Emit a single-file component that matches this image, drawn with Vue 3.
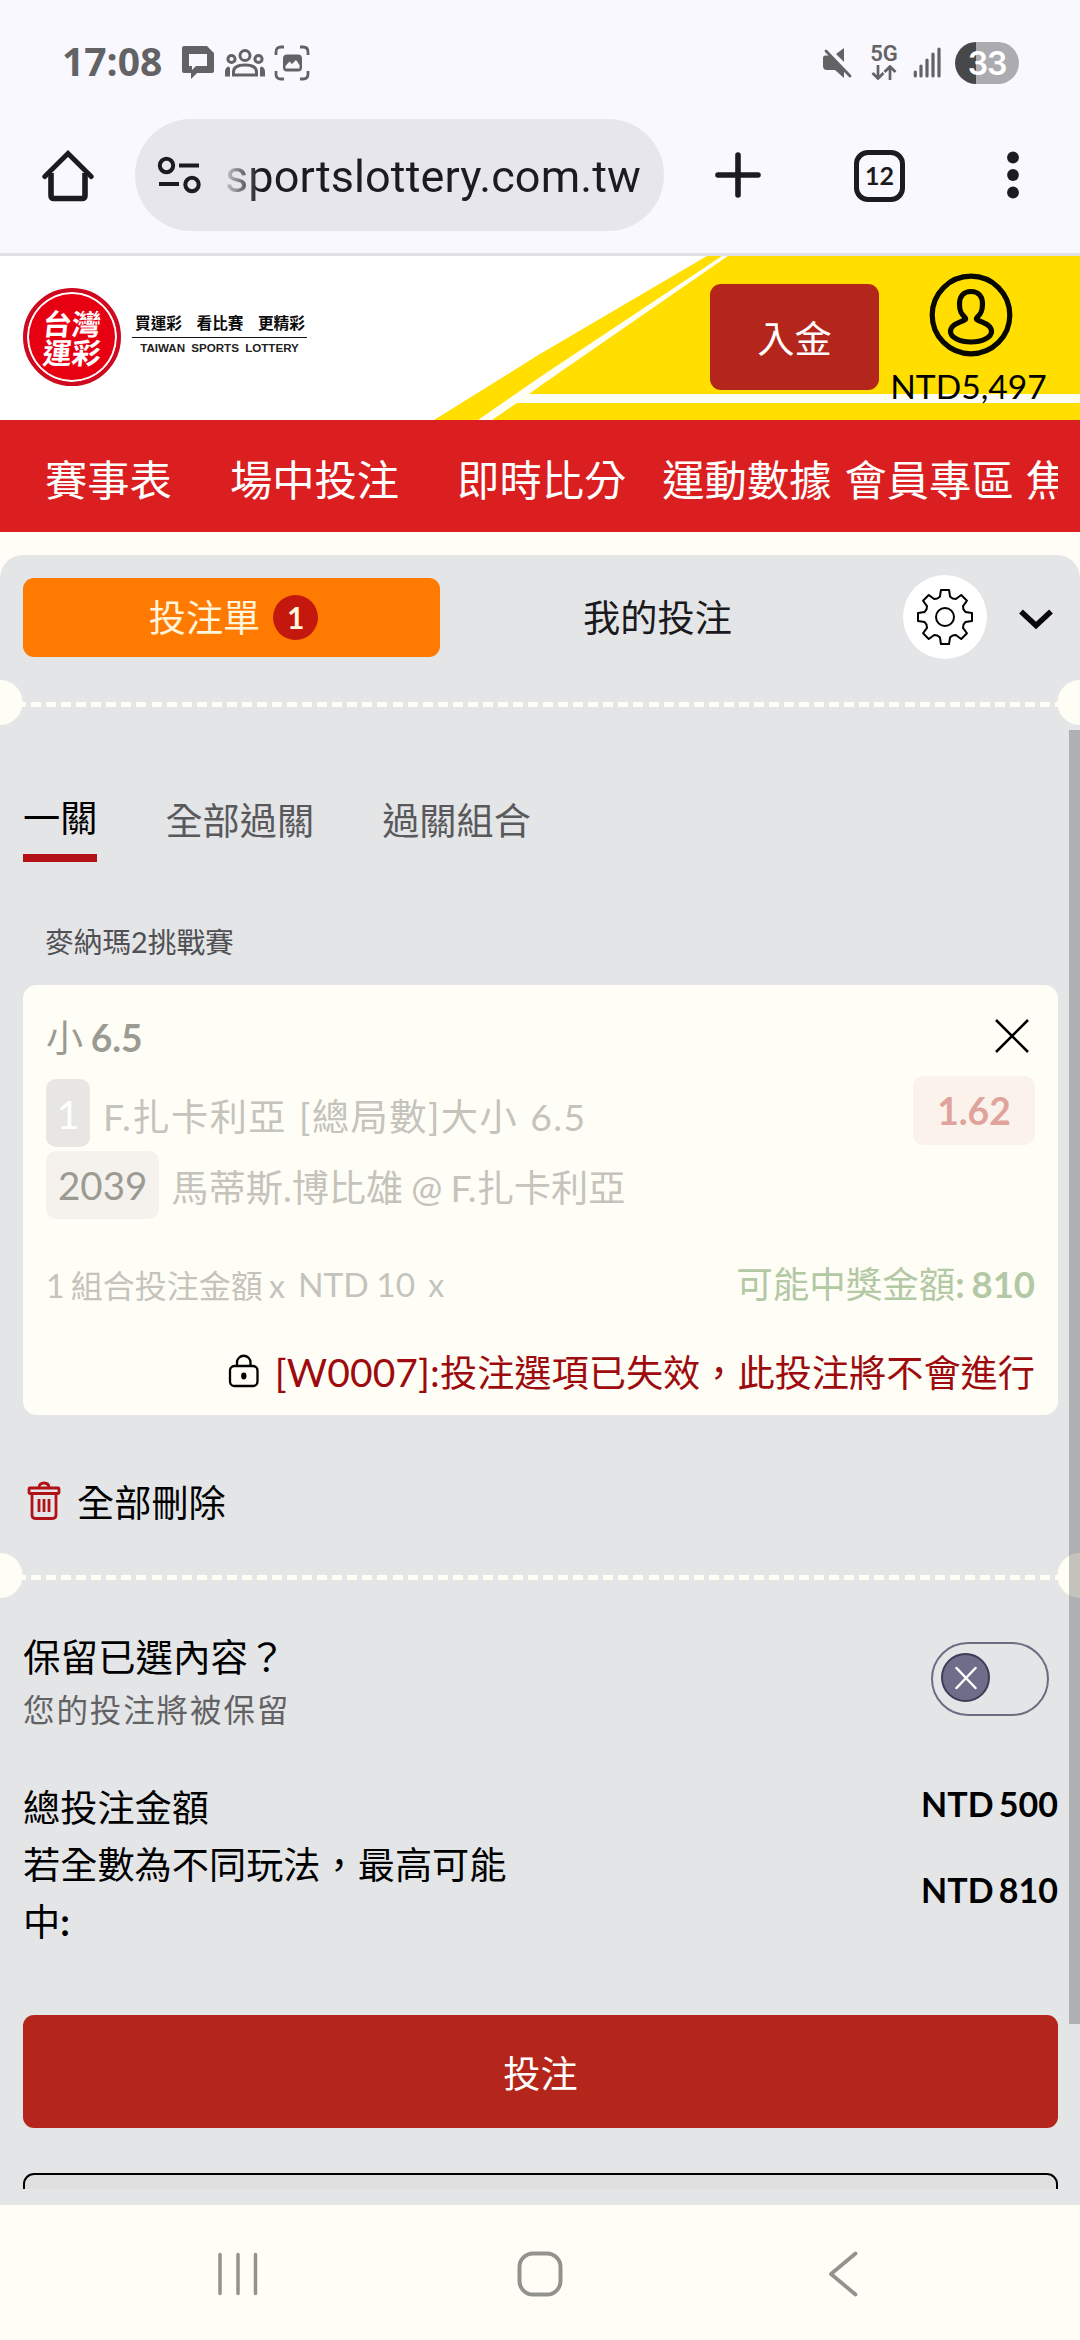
<script setup>
const navItems = [
  { label: '賽事表', gap: 0 },
  { label: '場中投注', gap: 58 },
  { label: '即時比分', gap: 58 },
  { label: '運動數據', gap: 36 },
  { label: '會員專區', gap: 13 },
  { label: '焦', gap: 12 },
]
const modes = ['一關', '全部過關', '過關組合']

// Closed outline of an eight-toothed cog centred on 0,0
const gearPath = (() => {
  const pts = []
  for (let i = 0; i < 8; i++) {
    const base = i * 45 - 90
    for (const [offset, r] of [[-22.5, 20], [-14, 21], [-8.5, 27.3], [8.5, 27.3], [14, 21]]) {
      const a = ((base + offset) * Math.PI) / 180
      pts.push(`${(Math.cos(a) * r).toFixed(2)} ${(Math.sin(a) * r).toFixed(2)}`)
    }
  }
  return `M${pts.join('L')}Z`
})()
</script>

<template>
  <div class="screen" lang="zh-TW">
    <header class="status">
      <span class="clock">17:08</span>
      <svg class="note" width="34" height="36" viewBox="0 0 34 36">
        <path fill="#636366" fill-rule="evenodd" d="M3 1H26L33 8V26Q33 28 31 28H16L10 34V28H3Q1 28 1 26V3Q1 1 3 1ZM8 9V21H11V25L15 21H26V9Z" />
      </svg>
      <svg class="people" width="42" height="30" viewBox="0 0 42 30" fill="none" stroke="#636366" stroke-width="3">
        <circle cx="21" cy="7.5" r="5" />
        <circle cx="7.5" cy="11" r="3.6" />
        <circle cx="34.5" cy="11" r="3.6" />
        <path d="M9.500 27V24Q9.500 17 21 17T32.500 24V27Z" />
        <path fill="#636366" stroke="none" d="M1 28.500V24Q1 19 5 18.500L6 20V28.500ZM41 28.500V24Q41 19 37 18.500L36 20V28.500Z" />
      </svg>
      <svg class="capture" width="36" height="36" viewBox="0 0 36 36">
        <path fill="none" stroke="#636366" stroke-width="2.800" d="M2 10V7Q2 2 7 2H10M26 2H29Q34 2 34 7V10M34 26V29Q34 34 29 34H26M10 34H7Q2 34 2 29V26" />
        <rect x="9" y="9.500" width="19" height="17" rx="4" fill="#636366" />
        <path fill="#f9f8fe" d="M11.500 23.500V21L15.500 16.500L18 19L22 15L25.500 20V23.500Z" />
      </svg>
      <div class="status-right">
        <svg width="30" height="32" viewBox="0 0 30 32">
          <path fill="#636366" d="M1 10.500Q1 8.500 3.500 8.500H8L22 23V31L13 23H5Q1 23 1 19ZM14 7L22 1V15Z" />
          <path stroke="#636366" stroke-width="2.800" stroke-linecap="round" d="M4 4L28 29" />
        </svg>
        <div class="net">
          <span>5G</span>
          <svg width="26" height="15" viewBox="0 0 26 15" fill="none" stroke="#636366" stroke-width="2.700">
            <path d="M7 0V13M1.500 8L7 13.500L12.500 8M19 15V2M13.500 7L19 1.500L24.500 7" />
          </svg>
        </div>
        <svg class="bars" width="28" height="31" viewBox="0 0 28 31" stroke="#636366" stroke-width="3.200" stroke-linecap="round">
          <path d="M2.300 25V29M8 19V29M14 13V29M20 7V29M26 2V29" />
        </svg>
        <div class="battery">33</div>
      </div>
    </header>

    <div class="toolbar">
      <svg class="home" width="52" height="54" viewBox="0 0 52 54" fill="none" stroke="#1b1b20" stroke-width="5.600">
        <path stroke-linejoin="round" d="M9 24V46.500Q9 49.500 12 49.500H40Q43 49.500 43 46.500V24" />
        <path stroke-linecap="round" stroke-width="5" d="M2.800 27.500L26 4.500L49.200 27.500" />
      </svg>
      <div class="url">
        <svg width="44" height="38" viewBox="0 0 44 38" fill="none" stroke="#1b1b20" stroke-width="4">
          <circle cx="9.500" cy="9.500" r="6.700" /><circle cx="35" cy="28.500" r="6.700" />
          <path d="M22 9.500H42M2 28H22" />
        </svg>
        <span class="host">sportslottery.com.tw</span>
      </div>
      <svg class="plus" width="46" height="46" viewBox="0 0 46 46" stroke="#1b1b20" stroke-width="5.600" stroke-linecap="round">
        <path d="M23 3V43M3 23H43" />
      </svg>
      <div class="tab-count">12</div>
      <svg class="dots" width="12" height="48" viewBox="0 0 12 48" fill="#1b1b20">
        <circle cx="6" cy="6.500" r="5.900" /><circle cx="6" cy="24" r="5.900" /><circle cx="6" cy="41.500" r="5.900" />
      </svg>
    </div>

    <div class="brand">
      <svg class="stripes" width="1080" height="164" viewBox="0 0 1080 164">
        <path fill="#ffde00" d="M707 0H1080V164H434L540 98Z" />
        <path fill="#fffef4" d="M722 0H728L540 130L529 138H1080V147H517L492 164H478L540 121Z" />
      </svg>
      <div class="seal"><span>台灣</span><span>運彩</span></div>
      <div class="slogan">
        <div class="slogan-zh"><span>買運彩</span><span>看比賽</span><span>更精彩</span></div>
        <div class="slogan-en">TAIWAN SPORTS LOTTERY</div>
      </div>
      <button class="deposit">入金</button>
      <div class="account">
        <svg width="84" height="84" viewBox="0 0 84 84" fill="none" stroke="#080800" stroke-width="5.200">
          <circle cx="42" cy="42" r="38.800" />
          <path stroke-linejoin="round" d="M42 18.500C34 18.500 30.500 24 30.500 31C30.500 38 32 41 36 44.500Q37.500 46 35.500 47C30 50 21.500 51.500 21.500 58.500C21.500 64.500 31 69 42 69S62.500 64.500 62.500 58.500C62.500 51.500 54 50 48.500 47Q46.500 46 48 44.500C52 41 53.500 38 53.500 31C53.500 24 50 18.500 42 18.500Z" />
        </svg>
        <span>NTD5,497</span>
      </div>
    </div>

    <nav class="menu">
      <div class="menu-track">
        <span v-for="n in navItems" :key="n.label" :style="{ marginLeft: n.gap + 'px' }">{{ n.label }}</span>
      </div>
    </nav>

    <main class="slip">
      <div class="slip-head">
        <button class="slip-tab active">投注單<i>1</i></button>
        <button class="slip-tab">我的投注</button>
        <div class="gear">
          <svg width="60" height="60" viewBox="-30 -30 60 60" fill="none" stroke="#000" stroke-width="2" stroke-linejoin="round">
            <path :d="gearPath" /><circle r="9" />
          </svg>
        </div>
        <svg class="chevron" width="34" height="20" viewBox="0 0 34 20" fill="none" stroke="#08080c" stroke-width="5.500">
          <path d="M2 2.500L17 16.500L32 2.500" />
        </svg>
      </div>
      <div class="perforation"></div>

      <div class="modes">
        <span v-for="(m, i) in modes" :key="m" :class="{ on: i === 0 }">{{ m }}</span>
      </div>
      <div class="league">麥納瑪2挑戰賽</div>

      <section class="card">
        <div class="pick">
          <span>小 <b>6.5</b></span>
          <svg width="34" height="34" viewBox="0 0 34 34" stroke="#000" stroke-width="2.600"><path d="M1 1L33 33M33 1L1 33" /></svg>
        </div>
        <div class="line">
          <span class="tag solid">1</span><span class="desc market">F.扎卡利亞 [總局數]大小 6.5</span>
          <span class="odds">1.62</span>
        </div>
        <div class="line second">
          <span class="tag">2039</span><span class="desc">馬蒂斯.博比雄 @ F.扎卡利亞</span>
        </div>
        <div class="stake">
          <span class="combo">1 組合投注金額 x</span>
          <span class="unit">NTD 10</span><span class="times">x</span>
          <span class="win">可能中獎金額<b>: 810</b></span>
        </div>
        <div class="error">
          <svg width="32" height="34" viewBox="0 0 32 34" fill="none" stroke="#000" stroke-width="2.300">
            <rect x="2" y="12" width="27.500" height="20" rx="4.500" /><path d="M9 12V8.500A6.700 6.700 0 0 1 22.500 8.500V12" />
            <ellipse cx="15.800" cy="22" rx="2.700" ry="3.400" fill="#000" stroke="none" />
          </svg>
          <span><span class="code">[W0007]:</span>投注選項已失效，此投注將不會進行</span>
        </div>
      </section>

      <div class="clear">
        <svg width="34" height="40" viewBox="0 0 34 40" fill="none" stroke="#b01217" stroke-width="2.800" stroke-linejoin="round">
          <rect x="2" y="7" width="30" height="5.500" rx="1" /><path d="M12 7Q12 2 17 2T22 7" />
          <path d="M5 12.500V34Q5 37.500 8.500 37.500H25.500Q29 37.500 29 34V12.500M12 18V31M17 18V31M22 18V31" />
        </svg>
        <span>全部刪除</span>
      </div>
      <div class="perforation"></div>

      <div class="keep">
        <div>
          <div class="keep-title">保留已選內容？</div>
          <div class="keep-sub">您的投注將被保留</div>
        </div>
        <div class="toggle">
          <div class="knob">
            <svg width="22" height="24" viewBox="0 0 22 24" stroke="#fff" stroke-width="2.500" stroke-linecap="round"><path d="M1.500 2L20.500 22M20.500 2L1.500 22" /></svg>
          </div>
        </div>
      </div>

      <div class="totals">
        <div class="labels">
          <div>總投注金額</div>
          <div>若全數為不同玩法，最高可能中<b>:</b></div>
        </div>
        <div class="sums"><div>NTD 500</div><div>NTD 810</div></div>
      </div>

      <button class="submit">投注</button>
      <div class="peek"><div class="outline-btn"></div></div>
      <div class="scrollbar"></div>
    </main>

    <footer class="sysnav">
      <svg width="42" height="44" viewBox="0 0 42 44" stroke="#93938d" stroke-width="3.500" stroke-linecap="round"><path d="M3 2.500V41.500M21 2.500V41.500M38.500 2.500V41.500" /></svg>
      <svg class="nav-home" width="46" height="46" viewBox="0 0 46 46" fill="none" stroke="#93938d" stroke-width="4"><rect x="2.500" y="2.500" width="41" height="41" rx="13.500" /></svg>
      <svg class="nav-back" width="30" height="46" viewBox="0 0 30 46" fill="none" stroke="#93938d" stroke-width="3.800" stroke-linecap="round" stroke-linejoin="round"><path d="M27.500 2.500L3 23L27.500 43.500" /></svg>
    </footer>
  </div>
</template>

<style>
body { background: #fffdf6; }
</style>

<style scoped>
* { box-sizing: border-box; }
svg { display: block; flex: none; }
button { border: 0; padding: 0; margin: 0; font: inherit; color: inherit; background: none; }
.screen {
  width: 1080px;
  height: 2340px;
  overflow: hidden;
  display: flex;
  flex-direction: column;
  background: #fffdf6;
  font-family: Lato, "Noto Sans CJK TC", sans-serif;
  font-size: 37.2px;
  white-space: nowrap;
}
.screen > * { flex: none; }

.status {
  height: 118px;
  padding: 2px 61px 0 62px;
  display: flex;
  align-items: center;
  background: #f9f8fe;
  color: #636366;
}
.clock { width: 119px; padding-top: 1px; font: 700 39px/50px "Open Sans", sans-serif; }
.note { margin-top: 6px; }
.people { margin: 5px 0 0 9px; }
.capture { margin: 6px 0 0 8px; }
.status-right { margin-left: auto; display: flex; align-items: center; padding-top: 5px; }
.net { width: 30px; margin-left: 17px; display: flex; flex-direction: column; align-items: center; gap: 2px; }
.net span { font: 600 22px/18px Roboto, sans-serif; }
.bars { margin-left: 14px; }
.battery {
  width: 64px;
  height: 42px;
  margin-left: 14px;
  border-radius: 21px;
  background: linear-gradient(90deg, #48484b 21px, #acabb0 21px);
  color: #fff;
  text-align: center;
  font: 600 32px/43px Inter, sans-serif;
  letter-spacing: -1px;
}

.toolbar {
  height: 138px;
  display: flex;
  align-items: flex-start;
  padding: 1px 0 0 42px;
  background: #f9f8fe;
  border-bottom: 3px solid #e1e0e6;
}
.home { margin-top: 30px; }
.url {
  width: 529px;
  height: 112px;
  margin-left: 41px;
  border-radius: 56px;
  padding-left: 22px;
  display: flex;
  align-items: center;
  background: #e7e6ed;
}
.host {
  margin-left: 24px;
  padding-top: 3px;
  font: 400 45px/56px Roboto, sans-serif;
  letter-spacing: .1px;
  color: transparent;
  background: linear-gradient(90deg, #c8c7cd 0, #1b1b20 34px);
  background-clip: text;
}
.plus { margin: 33px 0 0 51px; }
.tab-count {
  width: 51px;
  height: 52px;
  margin: 31px 0 0 93px;
  border: 5.5px solid #1b1b20;
  border-radius: 14px;
  text-align: center;
  font: 700 25px/41px Lato, sans-serif;
  color: #1b1b20;
}
.dots { margin: 32px 0 0 102px; }

.brand {
  position: relative;
  height: 164px;
  background: #fff;
  display: flex;
  align-items: flex-start;
}
.stripes { position: absolute; inset: 0; }
.brand > :not(.stripes) { position: relative; }
.seal {
  width: 98px;
  height: 98px;
  margin: 32px 0 0 23px;
  border: 4px solid #cf0a20;
  border-radius: 50%;
  box-shadow: inset 0 0 0 2px #fff;
  background: #e60012;
  color: #fff;
  display: flex;
  flex-direction: column;
  align-items: center;
  justify-content: center;
  font: 700 29px/29px "Noto Sans CJK TC", sans-serif;
}
.seal span { transform: skewX(-6deg); }
.slogan { width: 175px; margin: 57px 0 0 11px; color: #0c0c0c; }
.slogan-zh {
  display: flex;
  justify-content: space-between;
  padding: 0 2px 5px 3px;
  border-bottom: 1.5px solid #111;
  font: 700 15.7px/19px "Noto Sans CJK TC", sans-serif;
}
.slogan-en { text-align: center; font: 700 11.6px/20px "Liberation Sans", sans-serif; word-spacing: 3px; color: #222; }
.deposit {
  width: 169px;
  height: 106px;
  margin: 28px 0 0 403px;
  border-radius: 11px;
  background: #b4261b;
  color: #fff;
  line-height: 110px;
}
.account { width: 183px; display: flex; flex-direction: column; align-items: center; padding-top: 17px; }
.account span { font-size: 33.6px; line-height: 40px; margin-top: 9px; padding-right: 4px; color: #000; }

.menu { height: 112px; padding: 0 22px 0 45px; background: #db1f20; color: #fff; }
.menu-track { display: flex; overflow: hidden; font-size: 42.3px; line-height: 120px; height: 112px; }
.menu-track span { flex: none; }

.slip {
  position: relative;
  height: 1650px;
  margin-top: 23px;
  border-radius: 23px 23px 0 0;
  overflow: hidden;
  background: #e4e5e7;
  color: #000;
}
.slip-head { height: 125px; padding: 20px 27px 0 23px; display: flex; align-items: flex-start; }
.slip-tab { width: 417px; height: 79px; margin-top: 3px; display: flex; align-items: center; justify-content: center; line-height: 87px; color: #1a1a1c; }
.slip-tab.active { padding-left: 4px; border-radius: 11px; background: #ff7a00; color: #fff4dc; }
.slip-tab i {
  width: 45px;
  height: 45px;
  margin: -1px 0 0 13px;
  border-radius: 50%;
  background: #c4180f;
  font: 700 30px/45px Lato, sans-serif;
  text-align: center;
}
.slip-tab + .slip-tab { width: 435px; }
.gear { width: 84px; height: 84px; margin-left: 28px; border-radius: 50%; background: #fff; display: flex; align-items: center; justify-content: center; }
.chevron { margin: 34px 0 0 auto; }

/* Ticket tear line with half-round notches on both edges */
.perforation {
  height: 45px;
  background:
    radial-gradient(circle at 0 50%, #fffef4 22px, transparent 23px),
    radial-gradient(circle at 100% 50%, #fffef4 22px, transparent 23px),
    repeating-linear-gradient(90deg, #fffef4 0 10px, transparent 10px 15.06px) 15.500px 22px / 1049px 5px no-repeat;
}

.modes { height: 137px; padding: 62px 23px 0; display: flex; align-items: flex-start; gap: 68px; color: #59595c; line-height: 68px; }
.modes .on { color: #000; line-height: 62px; padding-bottom: 5px; border-bottom: 8px solid #b51217; }
.league { height: 123px; padding: 60px 0 0 45px; font-size: 28.700px; line-height: 40px; color: #505053; }

.card { height: 430px; margin: 0 22px 0 23px; padding: 24px 23px 0; border-radius: 14px; background: #fffef6; color: #c4c3bc; }
.pick { height: 70px; display: flex; justify-content: space-between; align-items: flex-start; line-height: 58px; color: #9b9a93; word-spacing: -2px; }
.pick svg { margin: 10px 6px 0 0; }
.line { height: 72px; display: flex; align-items: flex-start; }
.tag { height: 68px; padding: 0 12px; border-radius: 10px; background: #f5f2ed; color: #9b9a93; line-height: 68px; font-size: 38.500px; }
.tag.solid { width: 44px; background: #e7e6e2; color: #fff; padding: 0; text-align: center; font-size: 39px; line-height: 70px; }
.desc { margin-left: 12px; line-height: 73px; word-spacing: -1.500px; }
.market { letter-spacing: 1.500px; margin-left: 13px; line-height: 75px; word-spacing: 1px; }
.odds { width: 122px; height: 69px; margin: -3px 0 0 auto; border-radius: 10px; background: #faf2eb; color: #dfa39c; text-align: center; font-weight: 700; line-height: 70px; }
.stake { height: 76px; margin-top: 22px; display: flex; align-items: center; font-size: 32px; line-height: 40px; }
.combo { padding-top: 6px; word-spacing: -2px; }
.unit { margin: 1px 0 0 13px; font-size: 33.500px; word-spacing: -1px; }
.times { margin: 3px 0 0 13px; }
.win { margin-left: auto; font-size: 36.500px; color: #b3c8a4; padding-top: 2px; word-spacing: -2px; }
.error { height: 60px; margin-top: 21px; display: flex; align-items: center; justify-content: flex-end; color: #9d0b0e; line-height: 60px; }
.error svg { margin-right: 15px; margin-top: -3px; }
.code { font-size: 39px; letter-spacing: .1px; }

.clear { height: 138px; padding: 66px 0 0 27px; display: flex; align-items: flex-start; line-height: 44px; }
.clear span { margin-left: 16px; }

.keep { height: 181px; padding: 32px 31px 0 23px; display: flex; justify-content: space-between; }
.keep-title { line-height: 54px; font-size: 37.500px; }
.keep-sub { font-size: 31.500px; letter-spacing: 1.900px; line-height: 52px; color: #626265; }
.toggle { width: 118px; height: 74px; margin-top: 12px; padding: 9px 8px; border: 2px solid #6d6d82; border-radius: 37px; }
.knob { width: 49px; height: 49px; border-radius: 50%; border: 2px solid #3e3c58; background: #6f6e8a; display: flex; align-items: center; justify-content: center; }

.totals { height: 236px; padding: 0 22px 0 23px; display: flex; justify-content: space-between; line-height: 57px; }
.labels { width: 500px; white-space: normal; }
.sums { margin-top: -3px; font-size: 34px; font-weight: 700; text-align: right; line-height: 56px; word-spacing: -3px; }
.sums div + div { margin-top: 30px; }
.submit { display: block; width: 1035px; height: 113px; margin-left: 23px; border-radius: 11px; background: #b4261b; color: #fff; line-height: 118px; text-align: center; }
.peek { height: 61px; padding: 45px 22px 0 23px; overflow: hidden; }
.outline-btn { height: 110px; border: 2px solid #000; border-radius: 11px; background: #e0e0e0; }
.scrollbar { position: absolute; right: 0; top: 175px; width: 11px; height: 1294px; background: rgba(0, 0, 0, .23); }

.sysnav { height: 135px; padding-left: 217px; padding-top: 2px; display: flex; align-items: center; }
.nav-home { margin-left: 258px; }
.nav-back { margin-left: 265px; }
</style>
